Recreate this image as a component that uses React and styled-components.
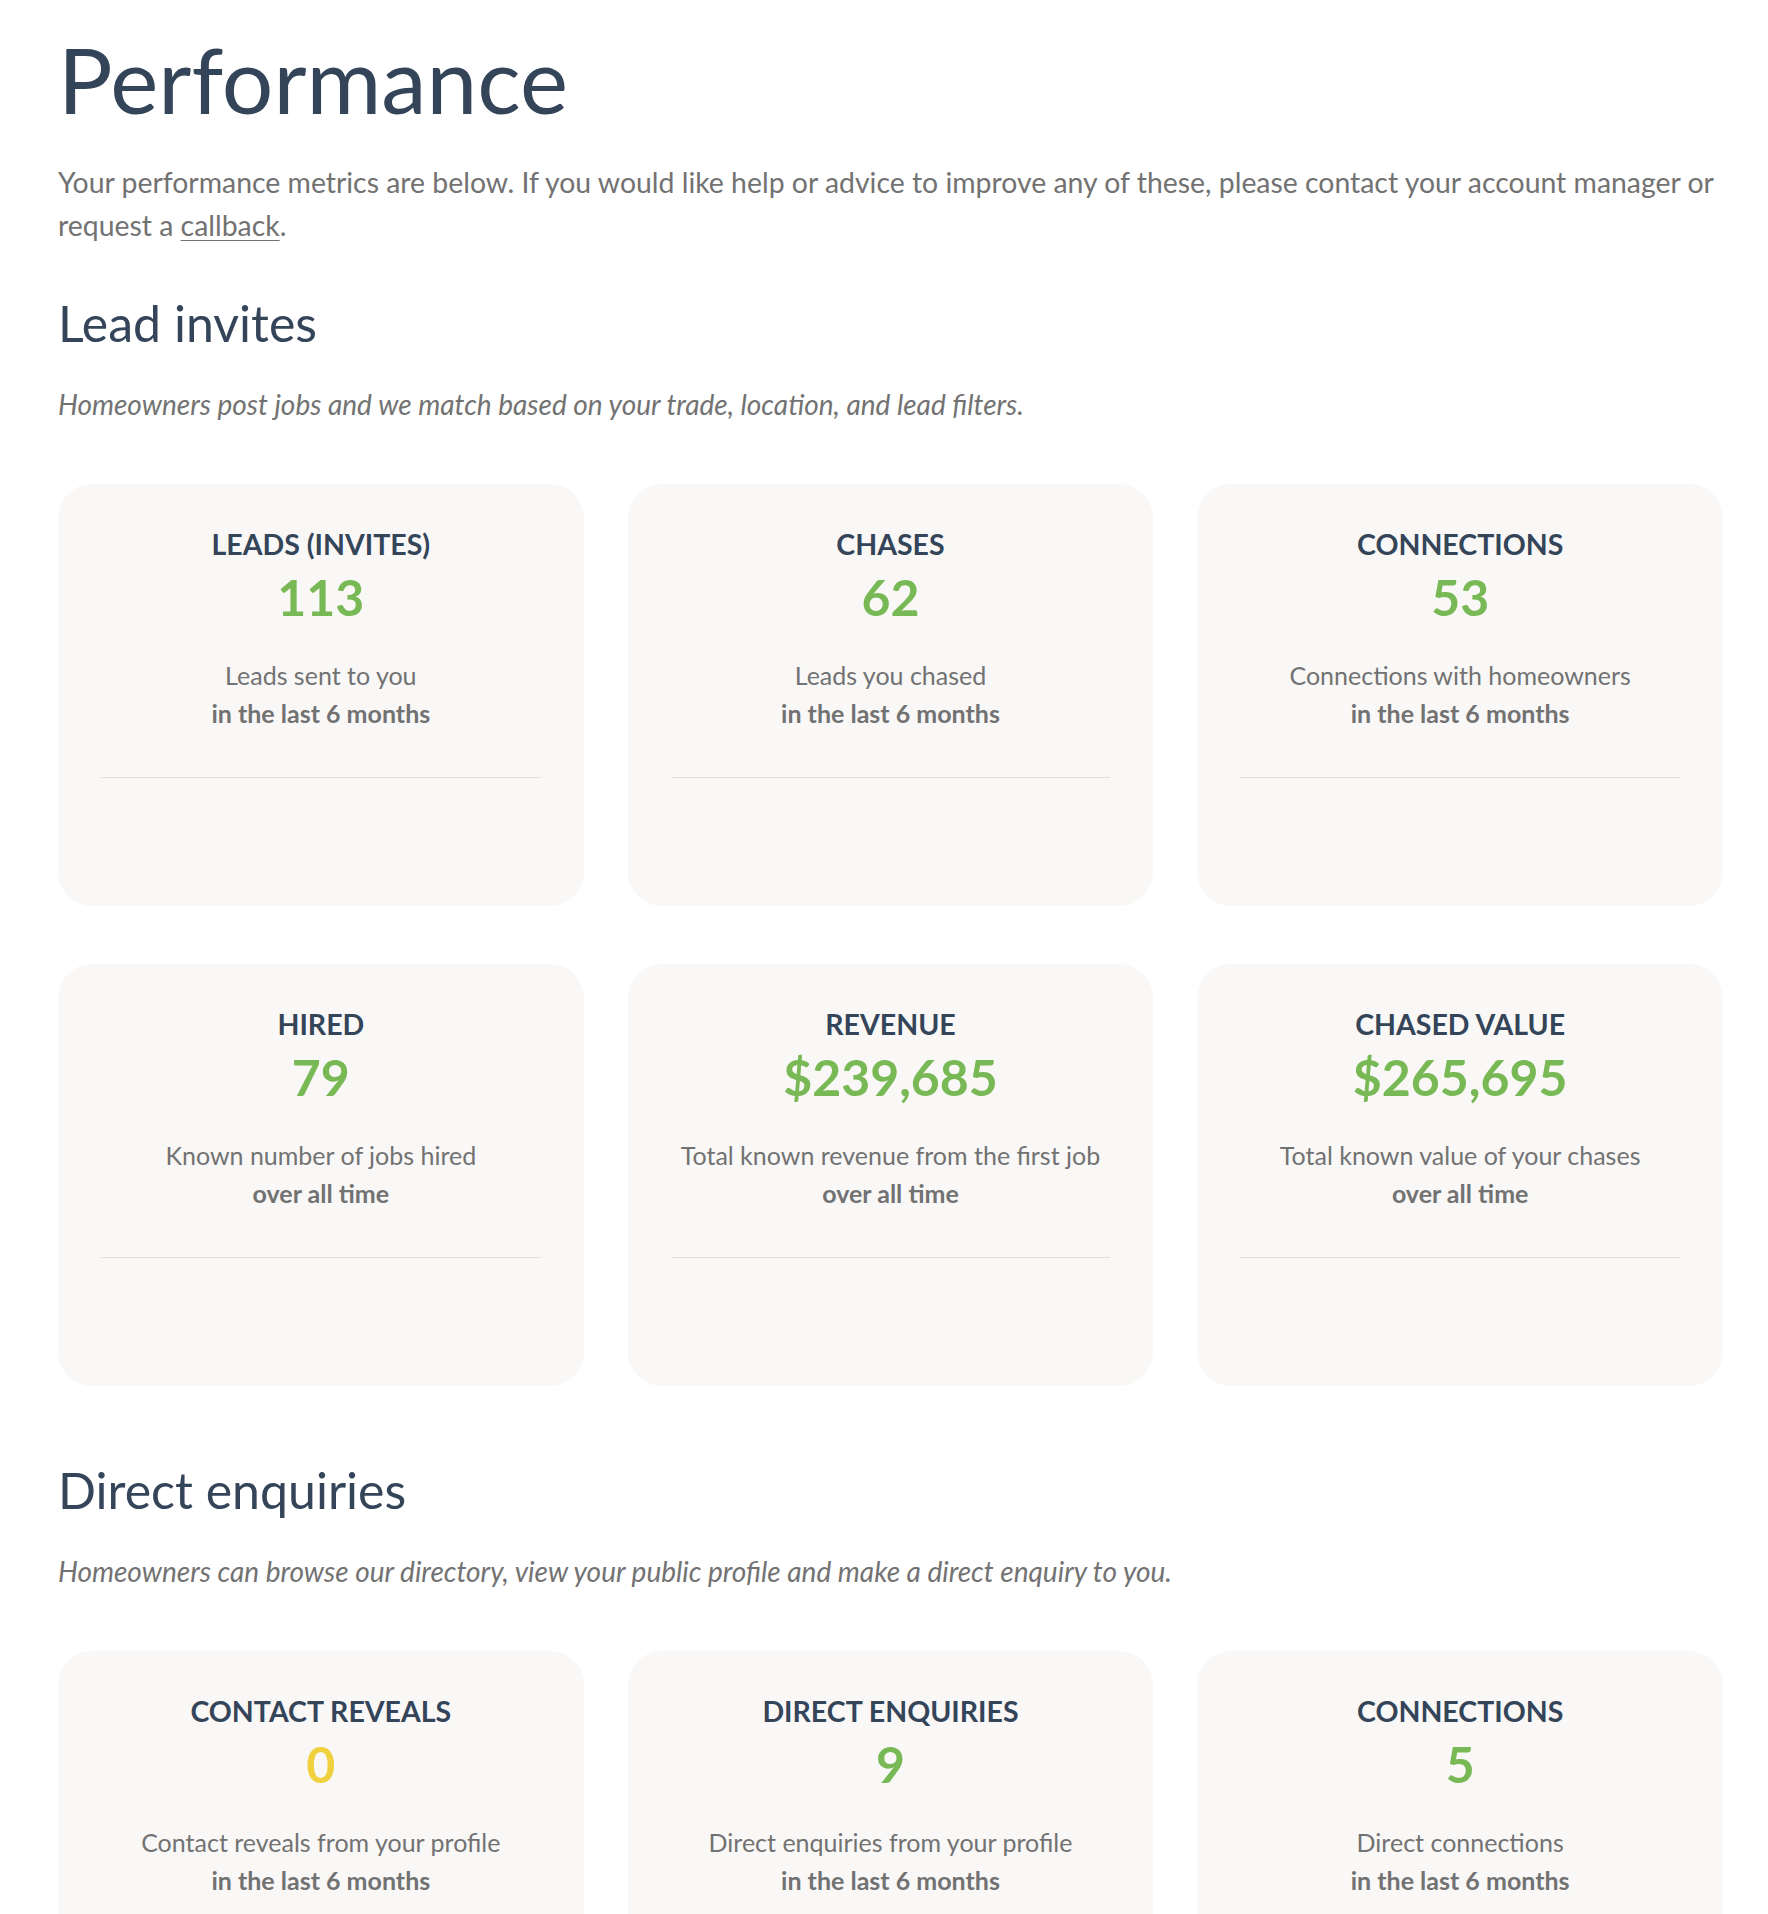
import styled, { createGlobalStyle } from "styled-components";

const GlobalStyle = createGlobalStyle`
	* {
		box-sizing: border-box;
	}

	body {
		margin: 0;
		background: #ffffff;
		font-family: Lato, "Open Sans", sans-serif;
		-webkit-font-smoothing: antialiased;
	}
`;

const colors = {
	heading: "#34455a",
	text: "#727272",
	green: "#78b955",
	yellow: "#f0d03c",
	card: "#f9f8f7",
	rule: "#e1e0df",
};

const Page = styled.main`
	padding: 24px 45px 60px 58px;
`;

const Title = styled.h1`
	margin: 0 0 28px;
	font-size: 91px;
	font-weight: 400;
	line-height: 1.2;
	color: ${colors.heading};
`;

const Intro = styled.p`
	margin: 0 0 46px;
	font-size: 28.4px;
	line-height: 43px;
	color: ${colors.text};

	a {
		color: inherit;
		text-decoration: underline;
		text-underline-offset: 4px;
		text-decoration-thickness: 1px;
	}
`;

const Section = styled.section`
	margin-bottom: 74px;
`;

const SectionTitle = styled.h2`
	margin: 0 0 30px;
	font-size: 50px;
	font-weight: 400;
	line-height: 1.2;
	color: ${colors.heading};
`;

const SectionNote = styled.p`
	margin: 0 0 58px;
	font-size: 28px;
	font-style: italic;
	line-height: 43px;
	color: ${colors.text};
`;

const CardGrid = styled.div`
	display: grid;
	grid-template-columns: repeat(3, 1fr);
	column-gap: 44px;
	row-gap: 58px;
`;

const Card = styled.div`
	display: flex;
	flex-direction: column;
	align-items: center;
	min-height: 422px;
	padding: 43px 43px 44px;
	background: ${colors.card};
	border-radius: 34px;
	text-align: center;
`;

const CardLabel = styled.h3`
	margin: 0 0 6px;
	font-size: 28.5px;
	font-weight: 700;
	line-height: 1.2;
	text-transform: uppercase;
	color: ${colors.heading};
`;

const CardValue = styled.div`
	margin-bottom: 29px;
	font-size: 50px;
	font-weight: 700;
	line-height: 1.2;
	color: ${({ tone }) => (tone === "warn" ? colors.yellow : colors.green)};
`;

const CardText = styled.p`
	margin: 0 0 45px;
	font-size: 25px;
	line-height: 38px;
	color: ${colors.text};

	strong {
		display: block;
		font-weight: 700;
	}
`;

const Rule = styled.hr`
	align-self: stretch;
	margin: 0;
	border: 0;
	border-top: 1px solid ${colors.rule};
`;

const CardFooter = styled.div`
	align-self: stretch;
	min-height: 83px;
`;

const leadStats = [
	{ label: "Leads (invites)", value: "113", text: "Leads sent to you", period: "in the last 6 months" },
	{ label: "Chases", value: "62", text: "Leads you chased", period: "in the last 6 months" },
	{ label: "Connections", value: "53", text: "Connections with homeowners", period: "in the last 6 months" },
	{ label: "Hired", value: "79", text: "Known number of jobs hired", period: "over all time" },
	{ label: "Revenue", value: "$239,685", text: "Total known revenue from the first job", period: "over all time" },
	{ label: "Chased value", value: "$265,695", text: "Total known value of your chases", period: "over all time" },
];

const directStats = [
	{ label: "Contact reveals", value: "0", tone: "warn", text: "Contact reveals from your profile", period: "in the last 6 months" },
	{ label: "Direct enquiries", value: "9", text: "Direct enquiries from your profile", period: "in the last 6 months" },
	{ label: "Connections", value: "5", text: "Direct connections", period: "in the last 6 months" },
];

function StatCard({ label, value, tone, text, period }) {
	return (
		<Card>
			<CardLabel>{label}</CardLabel>
			<CardValue tone={tone}>{value}</CardValue>
			<CardText>
				{text}
				<strong>{period}</strong>
			</CardText>
			<Rule />
			<CardFooter />
		</Card>
	);
}

function StatSection({ title, note, stats }) {
	return (
		<Section>
			<SectionTitle>{title}</SectionTitle>
			<SectionNote>{note}</SectionNote>
			<CardGrid>
				{stats.map((stat, i) => (
					<StatCard key={i} {...stat} />
				))}
			</CardGrid>
		</Section>
	);
}

export default function App() {
	return (
		<>
			<GlobalStyle />
			<Page>
				<Title>Performance</Title>
				<Intro>
					Your performance metrics are below. If you would like help or advice to improve any of
					these, please contact your account manager or request a <a href="#callback">callback</a>.
				</Intro>
				<StatSection
					title="Lead invites"
					note="Homeowners post jobs and we match based on your trade, location, and lead filters."
					stats={leadStats}
				/>
				<StatSection
					title="Direct enquiries"
					note="Homeowners can browse our directory, view your public profile and make a direct enquiry to you."
					stats={directStats}
				/>
			</Page>
		</>
	);
}
